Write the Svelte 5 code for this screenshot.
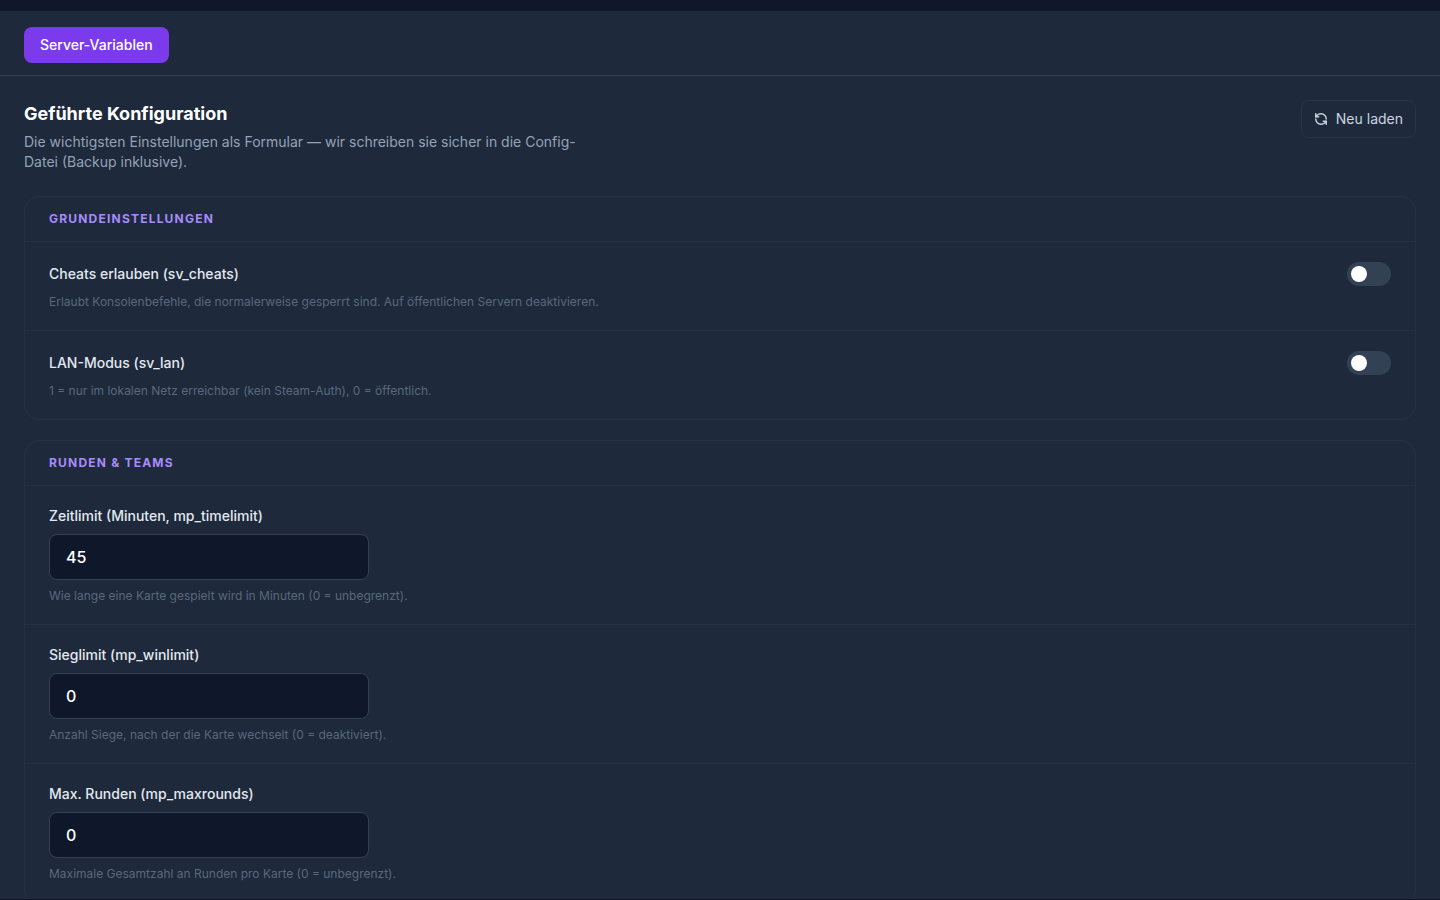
<script lang="ts">
	type Field = {
		key: string;
		label: string;
		help: string;
		type: 'toggle' | 'number';
		value: boolean | number;
	};

	let groups = $state<{ title: string; fields: Field[] }[]>([
		{
			title: 'Grundeinstellungen',
			fields: [
				{
					key: 'sv_cheats',
					label: 'Cheats erlauben (sv_cheats)',
					help: 'Erlaubt Konsolenbefehle, die normalerweise gesperrt sind. Auf öffentlichen Servern deaktivieren.',
					type: 'toggle',
					value: false
				},
				{
					key: 'sv_lan',
					label: 'LAN-Modus (sv_lan)',
					help: '1 = nur im lokalen Netz erreichbar (kein Steam-Auth), 0 = öffentlich.',
					type: 'toggle',
					value: false
				}
			]
		},
		{
			title: 'Runden & Teams',
			fields: [
				{
					key: 'mp_timelimit',
					label: 'Zeitlimit (Minuten, mp_timelimit)',
					help: 'Wie lange eine Karte gespielt wird in Minuten (0 = unbegrenzt).',
					type: 'number',
					value: 45
				},
				{
					key: 'mp_winlimit',
					label: 'Sieglimit (mp_winlimit)',
					help: 'Anzahl Siege, nach der die Karte wechselt (0 = deaktiviert).',
					type: 'number',
					value: 0
				},
				{
					key: 'mp_maxrounds',
					label: 'Max. Runden (mp_maxrounds)',
					help: 'Maximale Gesamtzahl an Runden pro Karte (0 = unbegrenzt).',
					type: 'number',
					value: 0
				}
			]
		}
	]);
</script>

<div class="shell">
	<main class="panel">
		<nav class="tabs">
			<button type="button" class="tab">Server-Variablen</button>
		</nav>

		<div class="content">
			<header class="intro">
				<div class="intro-text">
					<h1>Geführte Konfiguration</h1>
					<p>Die wichtigsten Einstellungen als Formular — wir schreiben sie sicher in die Config-Datei (Backup inklusive).</p>
				</div>
				<button type="button" class="reload">
					<svg viewBox="0 0 24 24" width="14" height="14" fill="none" stroke="currentColor" stroke-width="2.5" stroke-linecap="round" stroke-linejoin="round" aria-hidden="true">
						<path d="M21 12a9 9 0 0 0-9-9 9.75 9.75 0 0 0-6.74 2.74L3 8" />
						<path d="M3 3v5h5" />
						<path d="M3 12a9 9 0 0 0 9 9 9.75 9.75 0 0 0 6.74-2.74L21 16" />
						<path d="M16 16h5v5" />
					</svg>
					Neu laden
				</button>
			</header>

			<form class="groups">
				{#each groups as group}
					<section class="card">
						<h2>{group.title}</h2>
						{#each group.fields as field (field.key)}
							<div class="field">
								<div class="line" class:toggle-line={field.type === 'toggle'}>
									<label for={field.key}>{field.label}</label>
									{#if field.type === 'toggle'}
										<input id={field.key} class="toggle" type="checkbox" role="switch" bind:checked={field.value} />
									{:else}
										<input id={field.key} class="number" type="number" bind:value={field.value} />
									{/if}
								</div>
								<p class="help">{field.help}</p>
							</div>
						{/each}
					</section>
				{/each}
			</form>
		</div>
	</main>
</div>

<style>
	:global(body) {
		margin: 0;
		background: #0f172a;
	}
	.shell {
		box-sizing: border-box;
		height: 100vh;
		padding: 11px 0 1px;
		font-family: Inter, "Liberation Sans", sans-serif;
		font-size: 14px;
		line-height: 20px;
		color: #e2e8f0;
	}
	.panel {
		height: 100%;
		overflow-y: auto;
		scrollbar-width: none;
		background: #1e293b;
	}
	button,
	input {
		font: inherit;
	}
	h1,
	h2,
	p {
		margin: 0;
	}
	.tabs {
		display: flex;
		gap: 8px;
		padding: 16px 24px 12px;
		border-bottom: 1px solid #334155;
	}
	.tab {
		padding: 8px 16px;
		border: none;
		border-radius: 8px;
		background: #7c3aed;
		color: #fff;
		font-weight: 500;
		cursor: pointer;
	}
	.content {
		padding: 24px;
	}
	.intro {
		display: flex;
		align-items: flex-start;
		justify-content: space-between;
		gap: 16px;
		margin-bottom: 24px;
	}
	.intro-text {
		max-width: 576px;
	}
	h1 {
		margin-bottom: 4px;
		font-size: 18px;
		line-height: 28px;
		font-weight: 700;
		color: #fff;
	}
	.intro p {
		color: #94a3b8;
	}
	.reload {
		display: flex;
		align-items: center;
		gap: 8px;
		padding: 8px 12px;
		border: 1px solid #283548;
		border-radius: 8px;
		background: none;
		color: #cbd5e1;
		white-space: nowrap;
		cursor: pointer;
	}
	.groups {
		display: flex;
		flex-direction: column;
		gap: 20px;
	}
	.card {
		border: 1px solid #253246;
		border-radius: 16px;
	}
	h2 {
		padding: 12px 24px;
		border-bottom: 1px solid #253246;
		font-size: 12px;
		line-height: 20px;
		font-weight: 700;
		letter-spacing: 0.1em;
		text-transform: uppercase;
		color: #a78bfa;
	}
	.field {
		padding: 20px 24px;
	}
	.field + .field {
		border-top: 1px solid #253246;
	}
	.field:last-child {
		padding-bottom: 24px;
	}
	.field:last-child:has(.toggle) {
		padding-bottom: 20px;
	}
	.line {
		display: flex;
		flex-direction: column;
		align-items: flex-start;
		gap: 8px;
	}
	.toggle-line {
		flex-direction: row;
		align-items: center;
		justify-content: space-between;
	}
	label {
		font-weight: 500;
	}
	.help {
		margin-top: 8px;
		font-size: 12px;
		line-height: 16px;
		color: #5a687d;
	}
	.toggle {
		appearance: none;
		display: flex;
		align-items: center;
		box-sizing: border-box;
		width: 44px;
		height: 24px;
		margin: 0;
		padding: 0 4px;
		border-radius: 12px;
		background: #334155;
		cursor: pointer;
	}
	.toggle::before {
		content: "";
		width: 16px;
		height: 16px;
		border-radius: 50%;
		background: #fff;
	}
	.toggle:checked {
		justify-content: flex-end;
		background: #7c3aed;
	}
	.number {
		appearance: textfield;
		box-sizing: border-box;
		width: 100%;
		max-width: 320px;
		padding: 10px 16px;
		border: 1px solid #334155;
		border-radius: 8px;
		background: #0f172a;
		color: #fff;
		font-size: 16px;
		line-height: 24px;
		font-weight: 500;
	}
</style>
